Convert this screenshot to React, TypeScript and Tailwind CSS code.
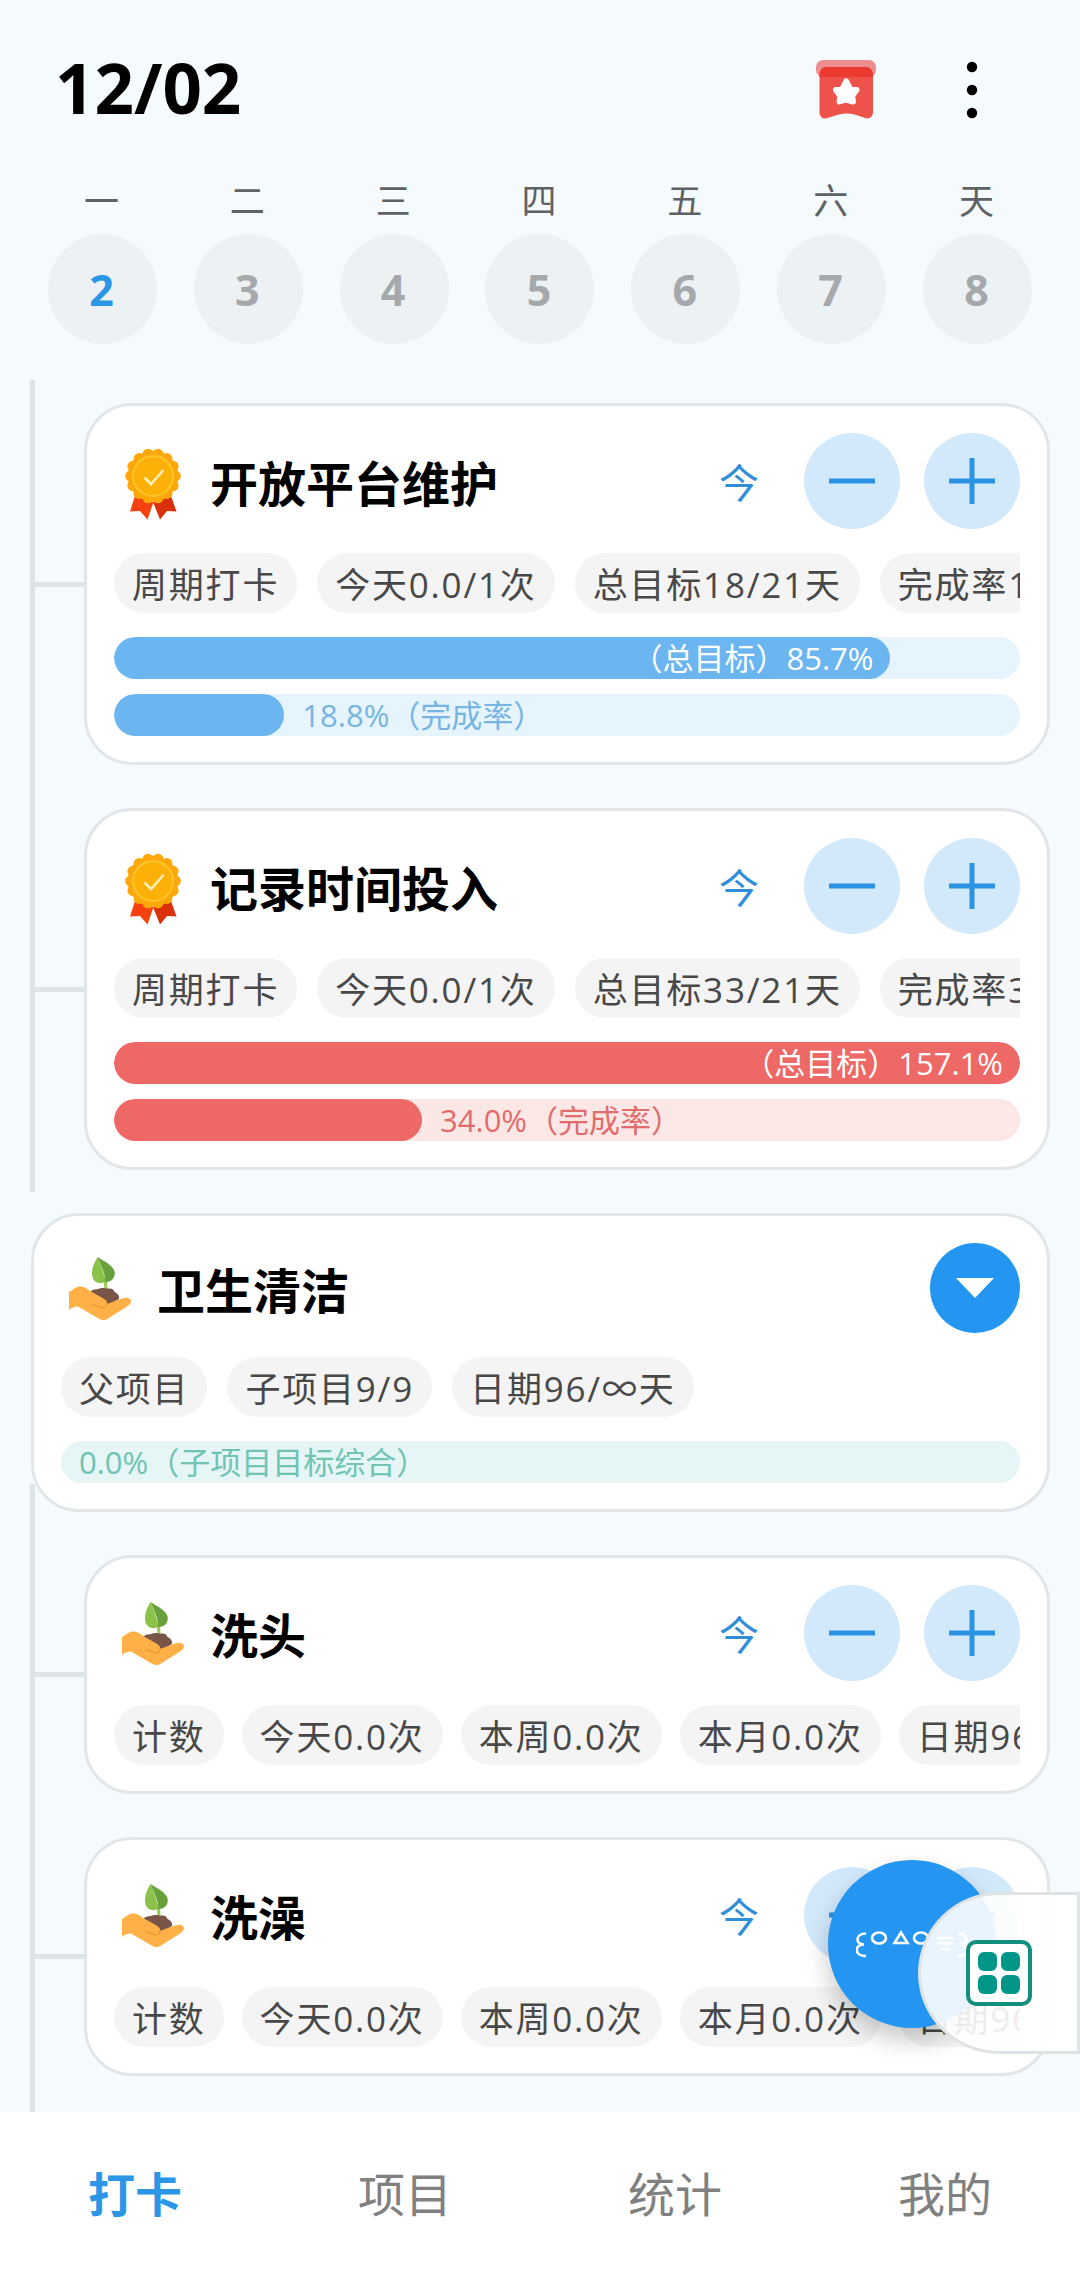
import type { ReactNode } from 'react';

type Tone = 'blue' | 'red' | 'teal';

interface Progress {
  percent: number;
  label: string;
  inside?: boolean;
}

interface Habit {
  title: string;
  icon: 'medal' | 'plant';
  tags: string[];
  tone?: Tone;
  progress?: Progress[];
}

const WEEK = [
  { name: '一', day: 2 },
  { name: '二', day: 3 },
  { name: '三', day: 4 },
  { name: '四', day: 5 },
  { name: '五', day: 6 },
  { name: '六', day: 7 },
  { name: '天', day: 8 },
];

const HABITS: Habit[] = [
  {
    title: '开放平台维护',
    icon: 'medal',
    tags: ['周期打卡', '今天0.0/1次', '总目标18/21天', '完成率18.8%'],
    tone: 'blue',
    progress: [
      { percent: 85.7, label: '（总目标）85.7%', inside: true },
      { percent: 18.8, label: '18.8%（完成率）' },
    ],
  },
  {
    title: '记录时间投入',
    icon: 'medal',
    tags: ['周期打卡', '今天0.0/1次', '总目标33/21天', '完成率34.0%'],
    tone: 'red',
    progress: [
      { percent: 100, label: '（总目标）157.1%', inside: true },
      { percent: 34, label: '34.0%（完成率）' },
    ],
  },
];

const CHILD_HABITS: Habit[] = [
  { title: '洗头', icon: 'plant', tags: ['计数', '今天0.0次', '本周0.0次', '本月0.0次', '日期96/∞天'] },
  { title: '洗澡', icon: 'plant', tags: ['计数', '今天0.0次', '本周0.0次', '本月0.0次', '日期96/∞天'] },
];

const TABS = ['打卡', '项目', '统计', '我的'];

const TONES: Record<Tone, { fill: string; track: string; text: string }> = {
  blue: { fill: 'bg-[#6bb6f0]', track: 'bg-[#e6f4fd]', text: 'text-[#76b5e3]' },
  red: { fill: 'bg-[#ee6866]', track: 'bg-[#fce7e7]', text: 'text-[#e06c6c]' },
  teal: { fill: 'bg-[#6cc7b8]', track: 'bg-[#e6f5f5]', text: 'text-[#6fc4b3]' },
};

const SCALLOPS = Array.from({ length: 14 }, (_, i) => {
  const a = ((i + 0.5) / 14) * Math.PI * 2;
  return { x: 28 + Math.sin(a) * 22.3, y: 28 - Math.cos(a) * 22.3 };
});

function MedalIcon() {
  return (
    <svg className="mt-[5px] mr-[1px] h-[72px] w-14" viewBox="0 0 56 72">
      <path d="M10 48 L5 63.5 L15 63 L22.5 71.500 L28.500 54 Z" fill="#f4420e" />
      <path d="M46 48 L51.500 63.500 L42 63 L35 71.500 L28 54 Z" fill="#d9300a" />
      <circle cx="28" cy="28" r="25.300" fill="#fda80a" />
      {SCALLOPS.map((s, i) => (
        <circle key={i} cx={s.x} cy={s.y} r="5.500" fill="#fda80a" />
      ))}
      <circle cx="28" cy="28" r="20" fill="#fdb007" stroke="#fec62c" strokeWidth="2" />
      <path d="M19.500 29.500 L26 36 L38.500 22" fill="none" stroke="#fff0b5" strokeWidth="2.600" />
    </svg>
  );
}

function PlantIcon() {
  return (
    <svg className="mt-[2px] h-16 w-[62px]" viewBox="0 0 62 64">
      <path d="M34.500 20 L38 20 L38.500 34 L35.500 34 Z" fill="#9ccc58" />
      <path d="M28.500 0 C24 8 22 13 23.500 20 C25 26 31 27.500 36.500 25 C35 16 32 8 28.500 0 Z" fill="#8bc34a" />
      <path d="M28.500 0 C36 5 44 8 45.700 15 C46.500 21 42 25.500 36.500 25 C36 16 32 8 28.500 0 Z" fill="#68a03c" />
      <path d="M21 36 C23 31 28 33 30 31.500 C34 30 37 32 39 31.500 C43 31 45 33 45.500 35 C48 36 51 39 50 42 L40 48 L30 44 Z" fill="#795548" />
      <path
        d="M0 35 C5 32 7 29.500 11 29.500 C16 29.500 18 32 22 34.500 L34.500 41.500 C37 43 38.500 44.500 38 47 L53 41.500 C58 39.500 62 41.500 62 44 C62 46.500 60 48 58 49.500 L39 61.500 C36 63.700 33 63.500 30 61.800 L9 49.500 C5 49.500 2 51 0 53 Z"
        fill="#ffb147"
      />
      <path d="M38 46 C38 49.500 36 51.500 32 50.500 L23 47.500" fill="none" stroke="#ee9a3a" strokeWidth="1.400" />
    </svg>
  );
}

function GiftIcon() {
  return (
    <svg className="mt-[1px] h-[60px] w-[62px]" viewBox="0 0 62 60">
      <rect x="1" y="0" width="60" height="17" rx="7" fill="#ee8d8d" />
      <path
        d="M4.500 15 C4.500 10 7 7 12 7 L50 7 C55 7 58 10 58 15 L58 52 C58 57 54 59.500 50 58 C43 55.500 38 53.500 31 53.500 C25 53.500 19 56 12.500 58 C8 59.500 4.500 57 4.500 52 Z"
        fill="#ee524a"
      />
      <path d="M4.500 17 C4.500 10 7 7 12 7 L50 7 C55 7 58 10 58 17 Z" fill="#eb3a2f" />
      <path
        d="M31.200 21.500 L34.800 28.700 L41.500 30 L37 36 L38 41.500 L31.200 39.500 L24.500 41.500 L25.500 36 L21 30 L27.600 28.700 Z"
        fill="#fff"
        stroke="#fff"
        strokeWidth="6"
        strokeLinejoin="round"
      />
    </svg>
  );
}

function MoreIcon() {
  return (
    <svg className="mt-[2px] h-[58px] w-3" viewBox="0 0 12 58">
      <circle cx="6" cy="6" r="5.200" />
      <circle cx="6" cy="29" r="5.200" />
      <circle cx="6" cy="52" r="5.200" />
    </svg>
  );
}

function RoundButton({ plus = false }: { plus?: boolean }) {
  return (
    <button type="button" className="flex size-24 items-center justify-center rounded-full bg-[#d2e8fb]">
      <svg className="size-12" viewBox="0 0 48 48" stroke="#2b93e4" strokeWidth="5">
        <path d="M1 24 H47" />
        {plus && <path d="M24 1 V47" />}
      </svg>
    </button>
  );
}

function Tag({ text }: { text: string }) {
  // the infinity sign is too narrow in Open Sans
  const [before, after] = text.split('∞');
  return (
    <span className="h-[60px] shrink-0 rounded-full bg-[#f4f4f4] px-[18px] text-[35px] leading-[63px] tracking-[1.8px] whitespace-nowrap text-[#484848]">
      {before}
      {after && <span className="font-['Noto_Sans_CJK_SC',sans-serif] leading-none">∞</span>}
      {after}
    </span>
  );
}

function ProgressBar({ item, tone }: { item: Progress; tone: Tone }) {
  const t = TONES[tone];
  return (
    <div
      className={`flex h-[42px] items-center overflow-hidden rounded-full font-['Open_Sans','Noto_Sans_CJK_SC',sans-serif] text-[31px] leading-none whitespace-nowrap ${t.track}`}
    >
      <div
        className={`flex h-full items-center justify-end rounded-full ${t.fill}`}
        style={{ width: `${item.percent}%` }}
      >
        {item.inside && <span className="pr-[17px] text-white">{item.label}</span>}
      </div>
      {!item.inside && <span className={`pl-[18px] ${t.text}`}>{item.label}</span>}
    </div>
  );
}

interface CardProps {
  habit: Habit;
  actions: ReactNode;
}

function HabitCard({ habit, actions }: CardProps) {
  return (
    <div className="min-w-0 flex-1 rounded-[48px] border-[3px] border-[#e1e6e9] bg-white px-[27px] pt-[27px] pb-[26px]">
      <div className="flex items-center">
        <div className="flex w-[78px] justify-center">{habit.icon === 'medal' ? <MedalIcon /> : <PlantIcon />}</div>
        <h3 className="ml-[18px] flex-1 text-[48px] leading-[72px] font-bold">{habit.title}</h3>
        {actions}
      </div>
      <div
        className={`mt-6 flex overflow-hidden font-['Open_Sans','Noto_Sans_CJK_SC',sans-serif] ${
          habit.progress ? 'gap-5' : 'gap-[18px]'
        }`}
      >
        {habit.tags.map((tag) => (
          <Tag key={tag} text={tag} />
        ))}
      </div>
      {habit.progress && (
        <div className="mt-6 flex flex-col gap-[15px]">
          {habit.progress.map((item) => (
            <ProgressBar key={item.label} item={item} tone={habit.tone ?? 'blue'} />
          ))}
        </div>
      )}
    </div>
  );
}

function Timeline({ habits, className }: { habits: Habit[]; className: string }) {
  return (
    <div className={`ml-[30px] flex ${className}`}>
      <div className="w-[5px] bg-[#dde4e8]" />
      <div className="flex min-w-0 flex-1 flex-col gap-[43px]">
        {habits.map((habit) => (
          <div key={habit.title} className="flex items-center first:mt-[var(--first)]">
            <div className="h-[5px] w-[49px] bg-[#dde4e8]" />
            <HabitCard
              habit={habit}
              actions={
                <div className="flex items-center gap-6">
                  <span className="mr-[21px] text-[40px] leading-none text-[#308dd8]">今</span>
                  <RoundButton />
                  <RoundButton plus />
                </div>
              }
            />
          </div>
        ))}
      </div>
    </div>
  );
}

export default function App() {
  return (
    <div className="relative flex h-[2274px] w-[1080px] flex-col overflow-hidden bg-[#f5fbfd] font-['Noto_Sans_CJK_SC',sans-serif] text-black">
      <header className="flex h-[178px] items-center pl-[55px]">
        <h1 className="flex-1 pb-[4px] font-['Open_Sans',sans-serif] text-[69px] leading-none font-bold">12/02</h1>
        <div className="mr-[89px]">
          <GiftIcon />
        </div>
        <div className="mr-[102px]">
          <MoreIcon />
        </div>
      </header>

      <div className="flex h-[202px] justify-between px-[48px]">
        {WEEK.map(({ name, day }) => (
          <div key={day} className="flex w-[109px] flex-col items-center">
            <span className="h-[56px] pr-[2px] text-[35px] leading-[41px] text-[#5f6264]">{name}</span>
            <span
              className={`flex h-[110px] w-full items-center justify-center rounded-full bg-[#ecf2f4] pr-[2px] font-['Open_Sans',sans-serif] text-[43px] leading-none font-bold ${
                day === 2 ? 'text-[#2b95e6]' : 'text-[#a5a9ab]'
              }`}
            >
              {day}
            </span>
          </div>
        ))}
      </div>

      <main className="h-[1732px] shrink-0 overflow-hidden pr-[30px]">
        <Timeline habits={HABITS} className="h-[812px] [--first:23px]" />
        <div className="relative z-10 mt-[21px] ml-[31px] flex">
          <HabitCard
            habit={{
              title: '卫生清洁',
              icon: 'plant',
              tags: ['父项目', '子项目9/9', '日期96/∞天'],
              tone: 'teal',
              progress: [{ percent: 0, label: '0.0%（子项目目标综合）' }],
            }}
            actions={
              <button type="button" className="flex size-[90px] items-center justify-center rounded-full bg-[#2495f0]">
                <svg className="h-5 w-[38px]" viewBox="0 0 38 20" fill="#fff">
                  <path d="M0 0 H38 L19 20 Z" />
                </svg>
              </button>
            }
          />
        </div>
        <Timeline habits={CHILD_HABITS} className="-mt-[28px] h-[700px] [--first:71px]" />
      </main>

      <nav className="grid h-[162px] shrink-0 grid-cols-4 bg-white">
        {TABS.map((tab, i) => (
          <button
            key={tab}
            type="button"
            className={`pb-[4px] text-center text-[47px] leading-none ${i === 0 ? 'font-bold text-[#2b95e6]' : 'text-[#808080]'}`}
          >
            {tab}
          </button>
        ))}
      </nav>

      {/* floating action button */}
      <div className="absolute top-[1860px] left-[828px] z-20 flex size-[168px] items-center justify-center rounded-full bg-[#2495f0] shadow-[0_12px_24px_rgba(0,0,0,0.22)]">
        <svg className="h-7 w-28" viewBox="0 0 112 28" fill="none" stroke="#fff" strokeWidth="2.600">
          <path d="M10 3.500 C-1 3.500 -1 14.500 8 14.500 M8 14.500 C-2 14.500 -2 26 10 26" />
          <ellipse cx="23" cy="8" rx="7" ry="5.500" />
          <path d="M38.500 13 L45 2.500 L51.500 13 Z" />
          <ellipse cx="65" cy="8" rx="7" ry="5.500" />
          <path d="M81 8 H97 M81 13.500 H97 M84 19 H94" />
          <path d="M102 3.500 C113 3.500 113 14.500 104 14.500 M104 14.500 C114 14.500 114 26 102 26" />
        </svg>
      </div>

      {/* edge drawer handle */}
      <div className="absolute top-[1892px] right-0 z-30 h-[162px] w-[162px] rounded-l-[81px] border-[3px] border-[#dfe3e6] bg-white/90 pt-[45px] pl-[45px]">
        <div className="grid size-[66px] grid-cols-2 gap-1 rounded-[10px] border-4 border-[#128f7e] bg-white p-2">
          <i className="rounded-[6px] bg-[#029688]" />
          <i className="rounded-[6px] bg-[#029688]" />
          <i className="rounded-[6px] bg-[#029688]" />
          <i className="rounded-[6px] bg-[#029688]" />
        </div>
      </div>
    </div>
  );
}
